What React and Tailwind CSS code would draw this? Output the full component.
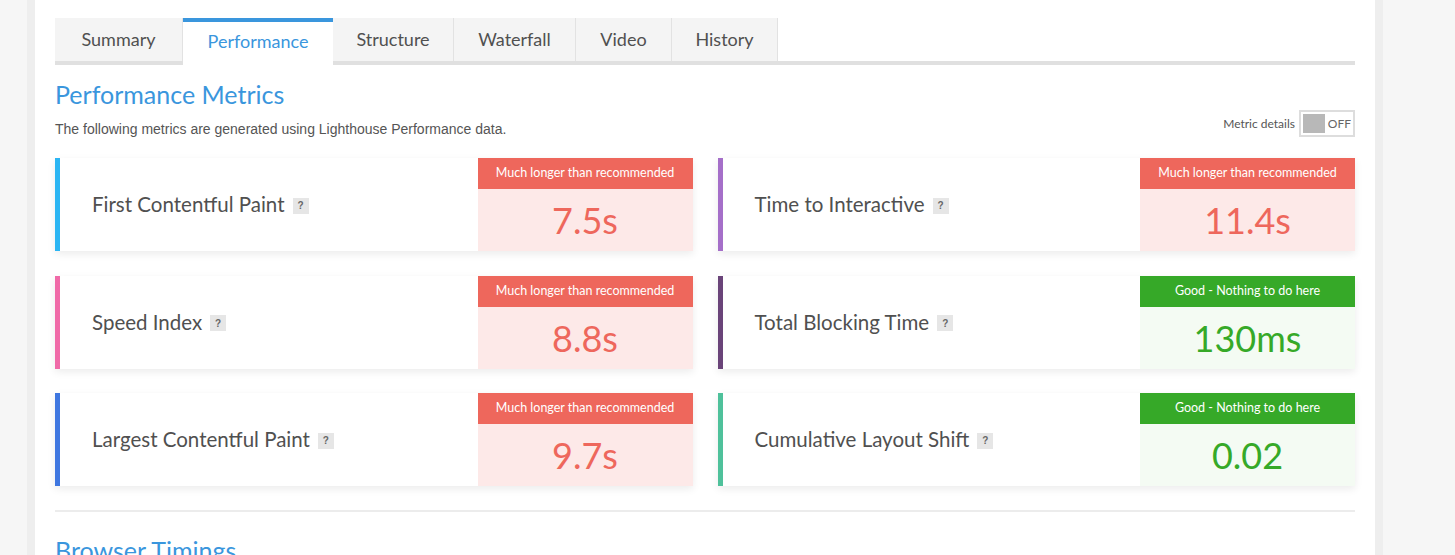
import React from "react";

const tabs = ["Summary", "Performance", "Structure", "Waterfall", "Video", "History"];
const tabWidths = {
  Summary: "w-[128px]",
  Performance: "w-[150px]",
  Structure: "w-[121px]",
  Waterfall: "w-[122px]",
  Video: "w-[96px]",
  History: "w-[106px]",
};

const metrics = [
  { name: "First Contentful Paint", value: "7.5s", bad: true, border: "border-[#2bb5f3]" },
  { name: "Time to Interactive", value: "11.4s", bad: true, border: "border-[#a56fc9]" },
  { name: "Speed Index", value: "8.8s", bad: true, border: "border-[#f06aa8]" },
  { name: "Total Blocking Time", value: "130ms", bad: false, border: "border-[#6a4479]" },
  { name: "Largest Contentful Paint", value: "9.7s", bad: true, border: "border-[#3f77e0]" },
  { name: "Cumulative Layout Shift", value: "0.02", bad: false, border: "border-[#4fc19b]" },
];

function MetricCard({ metric }) {
  return (
    <div
      className={`flex h-[93px] bg-white border-l-[5px] ${metric.border} shadow-[0_3px_8px_rgba(0,0,0,0.08)]`}
    >
      <div className="flex flex-1 items-center pl-[32px]">
        <span className="text-[20.5px] text-[#505050]">{metric.name}</span>
        <span className="ml-[8px] mt-[2px] flex h-[16px] w-[16px] items-center justify-center bg-[#e6e6e6] text-[10px] font-bold text-[#666] font-['Liberation_Sans',sans-serif]">
          ?
        </span>
      </div>
      <div className="flex w-[215px] flex-col">
        <div
          className={`flex h-[31px] items-center justify-center text-[12.5px] text-white ${
            metric.bad ? "bg-[#ee675c]" : "bg-[#36a928]"
          }`}
        >
          {metric.bad ? "Much longer than recommended" : "Good - Nothing to do here"}
        </div>
        <div
          className={`flex flex-1 items-center justify-center text-[36px] ${
            metric.bad ? "bg-[#fde9e8] text-[#ee675c]" : "bg-[#f4fbf3] text-[#36a928]"
          }`}
        >
          {metric.value}
        </div>
      </div>
    </div>
  );
}

export default function App() {
  return (
    <div className="flex h-[555px] w-full overflow-hidden bg-[#f6f6f6] font-['Lato',sans-serif]">
      <div className="w-[27px] shrink-0" />
      <div className="w-[8px] shrink-0 bg-[#eeeeee]" />
      <main className="w-[1340px] shrink-0 bg-white px-[20px] pt-[18px]">
        <div className="flex border-b-4 border-[#e0e0e0]">
          {tabs.map((tab) =>
            tab === "Performance" ? (
              <div
                key={tab}
                className={`${tabWidths[tab]} -mb-[4px] flex h-[47px] items-center justify-center border-t-4 border-[#3a96dd] bg-white pb-[4px] text-[18px] text-[#3a96dd]`}
              >
                {tab}
              </div>
            ) : (
              <div
                key={tab}
                className={`${tabWidths[tab]} flex h-[43px] items-center justify-center border-r border-[#e2e2e2] bg-[#f4f4f4] text-[18px] text-[#505050]`}
              >
                {tab}
              </div>
            )
          )}
        </div>

        <h1 className="mt-[13px] text-[25px] leading-[32px] text-[#3a96dd]">Performance Metrics</h1>

        <div className="flex items-end justify-between">
          <p className="text-[14px] leading-[16px] text-[#555] font-['Liberation_Sans',sans-serif]">
            The following metrics are generated using Lighthouse Performance data.
          </p>
          <div className="flex items-center">
            <span className="mr-[4px] text-[12px] text-[#555]">Metric details</span>
            <div className="flex h-[27px] w-[56px] items-center border-2 border-[#dddddd] p-[2px]">
              <div className="h-full w-[23px] bg-[#b8b8b8]" />
              <span className="ml-[3px] text-[12px] text-[#666]">OFF</span>
            </div>
          </div>
        </div>

        <div className="mt-[21px] grid grid-cols-2 gap-x-[25px] gap-y-[24.5px]">
          {metrics.map((m) => (
            <MetricCard key={m.name} metric={m} />
          ))}
        </div>

        <div className="mt-[24px] h-[2px] bg-[#ececec]" />

        <h2 className="mt-[22px] text-[25px] leading-[32px] text-[#3a96dd]">Browser Timings</h2>
      </main>
      <div className="w-[8px] shrink-0 bg-[#eeeeee]" />
      <div className="flex-1" />
    </div>
  );
}
